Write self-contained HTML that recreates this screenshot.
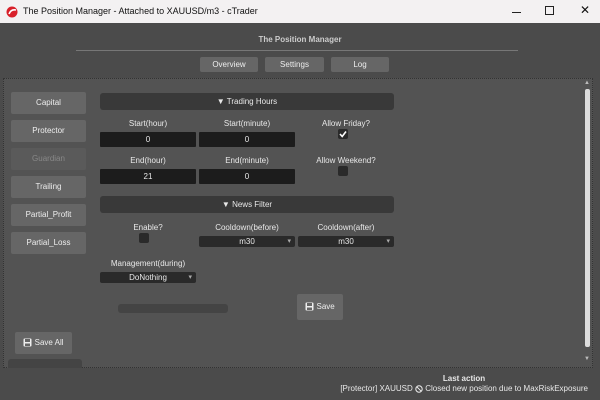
<!DOCTYPE html>
<html><head><style>
*{margin:0;padding:0;box-sizing:border-box}
body{width:600px;height:400px;background:#4b4b4b;font-family:"Liberation Sans",sans-serif;font-size:8px;color:#e8e8e8;position:relative;overflow:hidden}
.a{position:absolute}
.tb{left:0;top:0;width:600px;height:23px;background:#f3f1f2;color:#111;font-size:9px}
.btn{position:absolute;background:#666;border-radius:2px;color:#eee;text-align:center;font-size:8px}
.lb{left:11px;width:75px;height:22px;line-height:22px}
.hd{position:absolute;left:100px;width:294px;height:17px;background:#393939;border-radius:3px;text-align:center;line-height:17px;font-size:8px}
.in{position:absolute;background:#1c1c1c;height:15px;line-height:15px;text-align:center;width:96px;border-radius:1px}
.lab{position:absolute;text-align:center;width:96px}
.cb{position:absolute;width:10px;height:10px;background:#2a2a2a;border-radius:2px}
.dd{position:absolute;background:#2a2a2a;height:11px;line-height:11px;text-align:center;width:96px;border-radius:2px}
.dd:after{content:"▾";position:absolute;right:4px;font-size:7px;color:#aaa}
svg{vertical-align:middle}
</style></head><body>
<div class="a tb">
 <svg class="a" style="left:6px;top:6px" width="12" height="12" viewBox="0 0 12 12"><circle cx="6" cy="6" r="5.5" fill="#d8202a"/><path d="M3 8 Q5 3 10 4" stroke="#fff" stroke-width="1.6" fill="none"/></svg>
 <div class="a" style="left:23px;top:6px">The Position Manager - Attached to XAUUSD/m3 - cTrader</div>
 <div class="a" style="left:512px;top:12px;width:9px;height:1px;background:#222"></div>
 <div class="a" style="left:545px;top:6px;width:9px;height:9px;border:1px solid #222"></div>
 <div class="a" style="left:580px;top:3px;font-size:12px">✕</div>
</div>
<div class="a" style="left:0;top:35px;width:600px;text-align:center;font-size:8px;font-weight:bold;color:#ccc">The Position Manager</div>
<div class="a" style="left:76px;top:50px;width:442px;height:1px;background:#777"></div>
<div class="btn" style="left:200px;top:57px;width:58px;height:15px;line-height:15px">Overview</div>
<div class="btn" style="left:265px;top:57px;width:59px;height:15px;line-height:15px">Settings</div>
<div class="btn" style="left:331px;top:57px;width:58px;height:15px;line-height:15px">Log</div>
<div class="a" style="left:3px;top:78px;width:590px;height:290px;background:#535353;border:1px dotted #333"></div>
<div class="a" style="left:585px;top:89px;width:5px;height:258px;background:#ddd;border-radius:2px"></div>
<div class="a" style="left:584px;top:80px;font-size:6px;color:#bbb">▲</div>
<div class="a" style="left:584px;top:356px;font-size:6px;color:#bbb">▼</div>
<div class="btn lb" style="top:92px">Capital</div>
<div class="btn lb" style="top:120px">Protector</div>
<div class="btn lb" style="top:148px;background:#5a5a5a;color:#888">Guardian</div>
<div class="btn lb" style="top:176px">Trailing</div>
<div class="btn lb" style="top:204px">Partial_Profit</div>
<div class="btn lb" style="top:232px">Partial_Loss</div>
<div class="hd" style="top:93px">▼ Trading Hours</div>
<div class="lab" style="left:100px;top:119px">Start(hour)</div>
<div class="lab" style="left:199px;top:119px">Start(minute)</div>
<div class="lab" style="left:298px;top:119px">Allow Friday?</div>
<div class="in" style="left:100px;top:132px">0</div>
<div class="in" style="left:199px;top:132px">0</div>
<div class="cb" style="left:338px;top:129px"><svg width="10" height="10" viewBox="0 0 10 10" style="vertical-align:top"><path d="M2 5 L4.2 7.5 L8 2.5" stroke="#fff" stroke-width="1.6" fill="none"/></svg></div>
<div class="lab" style="left:100px;top:156px">End(hour)</div>
<div class="lab" style="left:199px;top:156px">End(minute)</div>
<div class="lab" style="left:298px;top:156px">Allow Weekend?</div>
<div class="in" style="left:100px;top:169px">21</div>
<div class="in" style="left:199px;top:169px">0</div>
<div class="cb" style="left:338px;top:166px"></div>
<div class="hd" style="top:196px">▼ News Filter</div>
<div class="lab" style="left:100px;top:223px">Enable?</div>
<div class="lab" style="left:199px;top:223px">Cooldown(before)</div>
<div class="lab" style="left:298px;top:223px">Cooldown(after)</div>
<div class="cb" style="left:139px;top:233px"></div>
<div class="dd" style="left:199px;top:236px">m30</div>
<div class="dd" style="left:298px;top:236px">m30</div>
<div class="lab" style="left:100px;top:259px">Management(during)</div>
<div class="dd" style="left:100px;top:272px">DoNothing</div>
<div class="a" style="left:118px;top:304px;width:110px;height:9px;background:#444;border-radius:3px"></div>
<div class="btn" style="left:297px;top:294px;width:46px;height:26px;line-height:26px"><svg width="9" height="9" viewBox="0 0 9 9"><rect x="0.5" y="0.5" width="8" height="8" rx="1" fill="#eee"/><rect x="2" y="1" width="5" height="3" fill="#666"/><rect x="2" y="5.5" width="5" height="2.5" fill="#666"/></svg> Save</div>
<div class="btn" style="left:15px;top:332px;width:57px;height:22px;line-height:22px"><svg width="9" height="9" viewBox="0 0 9 9"><rect x="0.5" y="0.5" width="8" height="8" rx="1" fill="#eee"/><rect x="2" y="1" width="5" height="3" fill="#666"/><rect x="2" y="5.5" width="5" height="2.5" fill="#666"/></svg> Save All</div>
<div class="a" style="left:8px;top:359px;width:74px;height:9px;background:#444;border-radius:3px 3px 0 0"></div>
<div class="a" style="left:0;top:374px;width:600px;height:26px;background:#4b4b4b"></div>
<div class="a" style="left:420px;top:374px;width:88px;text-align:center;font-weight:bold;font-size:8px">Last action</div>
<div class="a" style="right:12px;top:384px;font-size:8px">[Protector] XAUUSD <svg width="8" height="8" viewBox="0 0 8 8"><circle cx="4" cy="4" r="3.2" stroke="#eee" fill="none"/><path d="M1.8 1.8 L6.2 6.2" stroke="#eee"/></svg> Closed new position due to MaxRiskExposure</div>
</body></html>
